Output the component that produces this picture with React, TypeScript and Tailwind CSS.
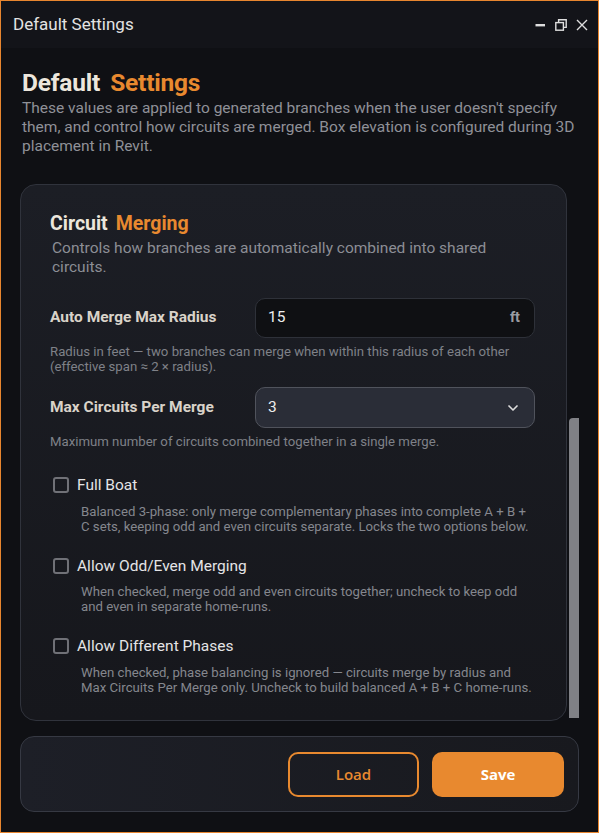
import { ChevronDown } from "lucide-react";

const ORANGE = "#e8892f";

function Checkbox({ label, desc }: { label: string; desc: React.ReactNode }) {
  return (
    <div>
      <div className="flex items-center gap-[8px] pl-[3px] h-[20px]">
        <span className="w-[16px] h-[16px] rounded-[3px] border-2 border-[#707177] shrink-0" />
        <span className="text-[15.5px] leading-[20px] text-[#e4e4e6]">{label}</span>
      </div>
      <p className="mt-[8.5px] pl-[31px] text-[13.2px] leading-[15px] text-[#85878e] whitespace-nowrap">{desc}</p>
    </div>
  );
}

export default function App() {
  return (
    <div
      className="w-[599px] h-[833px] border border-[#e8862f] flex flex-col bg-[#0f1014] text-[#e6e1d8]"
      style={{ fontFamily: "Roboto, 'Noto Sans', sans-serif" }}
    >
      {/* barre de titre */}
      <div className="h-[47px] shrink-0 flex items-center justify-between pl-[12px] pr-[10px] bg-[#131419]">
        <span className="text-[17px] text-[#e3e3e3]">Default Settings</span>
        <div className="flex items-center gap-[9px] text-[#dedede]">
          <svg width="12" height="12" viewBox="0 0 12 12">
            <rect x="1.5" y="5" width="9.5" height="2.4" fill="currentColor" />
          </svg>
          <svg width="12" height="12" viewBox="0 0 12 12" fill="none" stroke="currentColor" strokeWidth="1.4">
            <rect x="0.8" y="3.6" width="7.6" height="7.6" />
            <path d="M3.6 3.6V0.8h7.6v7.6H8.4" />
          </svg>
          <svg width="12" height="12" viewBox="0 0 12 12" fill="none" stroke="currentColor" strokeWidth="1.4">
            <path d="M1 1l10 10M11 1L1 11" />
          </svg>
        </div>
      </div>

      <div className="flex-1 min-h-0 flex flex-col px-[19px] pb-[20px]">
        <div className="pl-[2px] pt-[21px]">
          <h1 className="text-[24.5px] leading-[28px] font-bold tracking-[-0.2px]">
            <span className="text-[#ece6dc]">Default</span>
            <span className="ml-[10px]" style={{ color: ORANGE }}>Settings</span>
          </h1>
          <p className="mt-[2px] text-[15.5px] leading-[19px] text-[#8f9198] whitespace-nowrap">
            These values are applied to generated branches when the user doesn't specify
            <br />
            them, and control how circuits are merged. Box elevation is configured during 3D
            <br />
            placement in Revit.
          </p>
        </div>

        <div className="flex-1 min-h-0 mt-[28px] flex gap-[2px]">
          <div className="flex-1 rounded-[16px] border border-[#30333c] bg-gradient-to-b from-[#1c1e25] to-[#16171c] pl-[29px] pr-[30px] pt-[27px]">
            <h2 className="text-[19.5px] leading-[24px] font-bold">
              <span className="text-[#ece6dc]">Circuit</span>
              <span className="ml-[8px]" style={{ color: ORANGE }}>Merging</span>
            </h2>
            <p className="mt-[3px] pl-[2px] text-[15.5px] leading-[19px] text-[#8c8e95] whitespace-nowrap">
              Controls how branches are automatically combined into shared
              <br />
              circuits.
            </p>

            <div className="mt-[21px] flex items-center">
              <label className="w-[205px] text-[15.5px] font-bold text-[#d9d3c9]">Auto Merge Max Radius</label>
              <div className="w-[280px] h-[40px] rounded-[10px] border border-[#2e3139] bg-[#0f1013] flex items-center justify-between pl-[12px] pr-[14px]">
                <span className="text-[15.5px] text-[#eeeeee]">15</span>
                <span className="text-[14.5px] font-bold text-[#9b9ca1]">ft</span>
              </div>
            </div>
            <p className="mt-[5.5px] text-[13.2px] leading-[15px] text-[#7f8188] whitespace-nowrap">
              Radius in feet — two branches can merge when within this radius of each other
              <br />
              (effective span ≈ 2 × radius).
            </p>

            <div className="mt-[13.5px] flex items-center">
              <label className="w-[205px] text-[15.5px] font-bold text-[#d9d3c9]">Max Circuits Per Merge</label>
              <div className="w-[280px] h-[41px] rounded-[10px] border border-[#50535c] bg-[#2a2d37] flex items-center justify-between pl-[12px] pr-[13px]">
                <span className="text-[15.5px] text-[#eeeeee]">3</span>
                <ChevronDown size={16} strokeWidth={2.5} className="text-[#dddddd]" />
              </div>
            </div>
            <p className="mt-[5.5px] text-[13.2px] leading-[15px] text-[#7f8188]">
              Maximum number of circuits combined together in a single merge.
            </p>

            <div className="mt-[26.5px] flex flex-col gap-[22px]">
              <Checkbox
                label="Full Boat"
                desc={
                  <>
                    Balanced 3-phase: only merge complementary phases into complete A + B +
                    <br />
                    C sets, keeping odd and even circuits separate. Locks the two options below.
                  </>
                }
              />
              <Checkbox
                label="Allow Odd/Even Merging"
                desc={
                  <>
                    When checked, merge odd and even circuits together; uncheck to keep odd
                    <br />
                    and even in separate home-runs.
                  </>
                }
              />
              <Checkbox
                label="Allow Different Phases"
                desc={
                  <>
                    When checked, phase balancing is ignored — circuits merge by radius and
                    <br />
                    Max Circuits Per Merge only. Uncheck to build balanced A + B + C home-runs.
                  </>
                }
              />
            </div>
          </div>

          {/* barre de défilement */}
          <div className="w-[10px] flex flex-col">
            <div className="flex-1" />
            <div className="h-[300px] mb-[3px] bg-[#808186] rounded-tl-[4px]" />
          </div>
        </div>

        <div className="mt-[15px] h-[76px] shrink-0 rounded-[14px] border border-[#363943] bg-gradient-to-r from-[#1d1f27] to-[#18191e] flex items-center justify-end gap-[13px] pr-[14px]">
          <button
            className="w-[131px] h-[45px] rounded-[10px] border-2 border-[#e8892f] text-[15px] font-semibold"
            style={{ color: ORANGE, fontFamily: "'Open Sans', sans-serif" }}
          >
            Load
          </button>
          <button
            className="w-[132px] h-[45px] rounded-[10px] bg-[#e8892f] text-white text-[15px] font-bold"
            style={{ fontFamily: "'Open Sans', sans-serif" }}
          >
            Save
          </button>
        </div>
      </div>
    </div>
  );
}
